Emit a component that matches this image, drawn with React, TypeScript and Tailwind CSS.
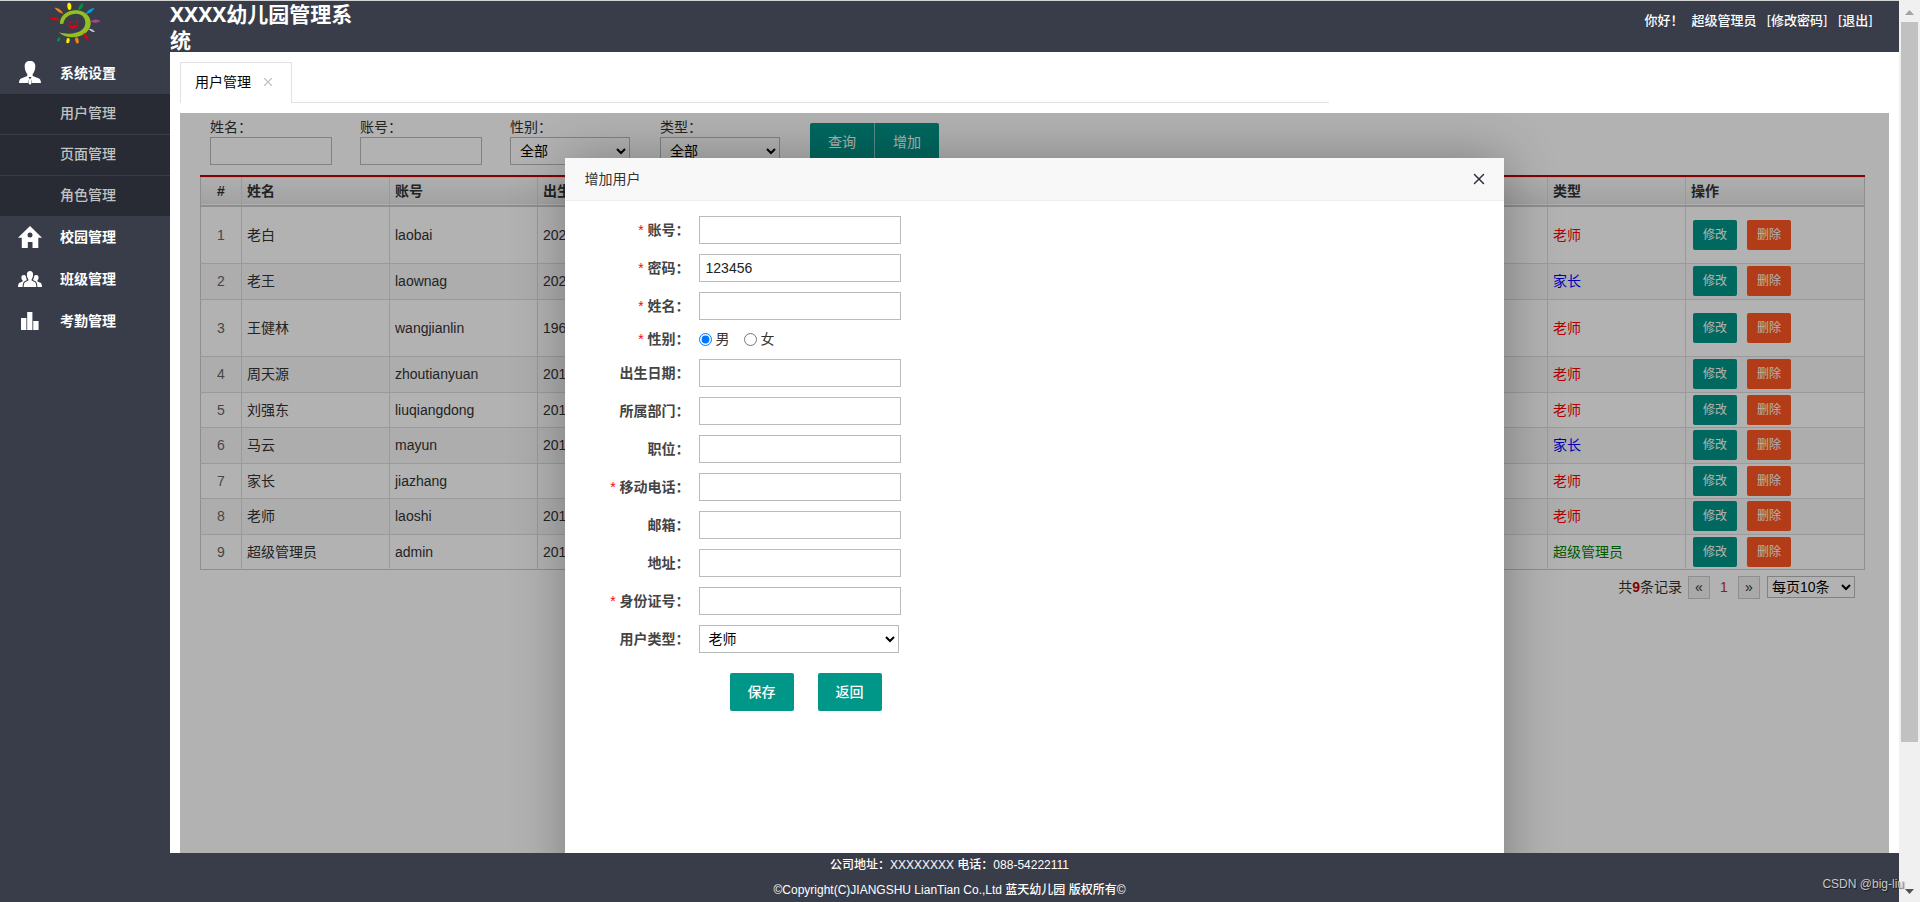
/**
 * User Management Page
 *
 * Kindergarten admin: sidebar, tab bar, user list and the "add user" dialog.
 */
import { useState } from "react";
import type { ReactNode } from "react";
import { X } from "lucide-react";

type UserType = "老师" | "家长" | "超级管理员";

interface User {
  name: string;
  account: string;
  birth: string;
  type: UserType;
  tall?: boolean;
}

const users: User[] = [
  { name: "老白", account: "laobai", birth: "2022", type: "老师", tall: true },
  { name: "老王", account: "laownag", birth: "2022", type: "家长" },
  { name: "王健林", account: "wangjianlin", birth: "1962", type: "老师", tall: true },
  { name: "周天源", account: "zhoutianyuan", birth: "2019", type: "老师" },
  { name: "刘强东", account: "liuqiangdong", birth: "2019", type: "老师" },
  { name: "马云", account: "mayun", birth: "2019", type: "家长" },
  { name: "家长", account: "jiazhang", birth: "", type: "老师" },
  { name: "老师", account: "laoshi", birth: "2019", type: "老师" },
  { name: "超级管理员", account: "admin", birth: "2019", type: "超级管理员" },
];

const typeColors: Record<UserType, string> = {
  老师: "text-[#ff0000]",
  家长: "text-[#0000ff]",
  超级管理员: "text-[#008000]",
};

const Logo = () => (
  <svg viewBox="150 5 150 126" className="h-[42px] w-[50px]" aria-hidden="true">
    <path
      d="M180 71C179 44 205 27 233 30C260 33 274 53 272 72C269 98 241 112 213 111C198 110 185 105 177 96C190 100 201 101 212 100C238 99 255 86 256 69C257 52 245 40 228 40C209 40 193 51 190 70Z"
      fill="#93c01f"
    />
    <path d="M150 55Q163 49 179 58Q165 62 150 55Z" fill="#e3000f" stroke="#e3000f" strokeWidth="2" />
    <path d="M165 23Q180 24 188 39Q174 36 165 23Z" fill="#f08519" stroke="#f08519" strokeWidth="2" />
    <ellipse cx="208" cy="18" rx="6" ry="11" transform="rotate(-6 208 18)" fill="#ffed00" />
    <path d="M248 9Q251 23 236 29Q234 17 248 9Z" fill="#009640" stroke="#009640" strokeWidth="2" />
    <path d="M282 24Q276 38 258 40Q266 26 282 24Z" fill="#009fe3" stroke="#009fe3" strokeWidth="2" />
    <path d="M273 63Q286 54 300 62Q287 71 273 63Z" fill="#a4478f" stroke="#a4478f" strokeWidth="2" />
    <path d="M266 85Q279 85 285 95Q272 95 266 85Z" fill="#d0bfe0" />
    <path d="M251 99Q264 106 266 119Q253 114 251 99Z" fill="#e3000f" stroke="#e3000f" strokeWidth="2" />
    <ellipse cx="231" cy="120" rx="5" ry="9.500" transform="rotate(-12 231 120)" fill="#f08519" />
    <ellipse cx="204" cy="121" rx="5" ry="8" transform="rotate(10 204 121)" fill="#ffed00" />
    <ellipse cx="176" cy="117" rx="4" ry="7" transform="rotate(28 176 117)" fill="#009640" />
    <circle cx="211" cy="65" r="3.500" fill="#e3000f" />
    <circle cx="231" cy="64" r="3.500" fill="#e3000f" />
    <path d="M202 71Q218 81 235 71Q232 84 219 85Q206 84 202 71Z" fill="#e3000f" />
  </svg>
);

const PersonIcon = () => (
  <svg viewBox="0 0 22 24" className="h-6 w-[22px]" fill="currentColor" aria-hidden="true">
    <path d="M11 0C14.500 0 16.500 2 16.300 5.500C16.200 9 15 11.500 13.700 13V15L20 17.500C21.500 18.300 21.800 19.800 22 22H13L11.800 17.500L12.500 16H9.500L10.200 17.500L9 22H0C.2 19.800.500 18.300 2 17.500L8.300 15V13C7 11.500 5.800 9 5.700 5.500C5.500 2 7.500 0 11 0Z" />
    <path d="M10.300 17.500H11.700L12.600 22L11 24L9.400 22Z" />
  </svg>
);

const HouseIcon = () => (
  <svg viewBox="0 0 24 24" className="h-6 w-6" aria-hidden="true">
    <path
      fill="currentColor"
      fillRule="evenodd"
      d="M12 1L24 12.800H20.300V23H14.500V17H9.800V23H3.800V12.800H0ZM12 7.500A2.500 2.500 0 1 0 12 12.500A2.500 2.500 0 1 0 12 7.500Z"
    />
  </svg>
);

const GroupIcon = () => (
  <svg viewBox="0 0 24 16" className="h-4 w-6" fill="currentColor" aria-hidden="true">
    <path d="M12 0C14 0 15.200 1.500 15.100 4C15 6 14.300 7.500 13.600 8.300V9.500L17 11.200C18 12 18.200 14 18.300 16H5.700C5.800 14 6 12 7 11.200L10.400 9.500V8.300C9.700 7.500 9 6 8.900 4C8.800 1.500 10 0 12 0Z" />
    <path d="M5.800 4C7 4 7.800 4.600 8 5.800C8.200 7.600 8.700 8.400 9 9L6.200 10.400C5 11.300 4.700 13.500 4.600 16H0C.2 13.600.500 12.300 1.500 11.800L4.600 10.400V9.500C3.900 8.800 3.300 7.800 3.400 6.300C3.500 4.800 4.300 4 5.800 4Z" />
    <path d="M18.200 4C17 4 16.200 4.600 16 5.800C15.800 7.600 15.300 8.400 15 9L17.800 10.400C19 11.300 19.300 13.500 19.400 16H24C23.800 13.600 23.500 12.300 22.500 11.800L19.400 10.400V9.500C20.100 8.800 20.700 7.800 20.600 6.300C20.500 4.800 19.700 4 18.200 4Z" />
  </svg>
);

const BarsIcon = () => (
  <svg viewBox="0 0 18 18" className="h-[18px] w-[18px]" fill="currentColor" aria-hidden="true">
    <path d="M0 6H5.400V18H0ZM6.200 0H11.400V18H6.200ZM12.200 9H17.600V18H12.200Z" />
  </svg>
);

function MenuHeader({ icon, children }: { icon: ReactNode; children: ReactNode }) {
  return (
    <a href="#" className="flex h-[42px] items-center font-bold text-white">
      <span className="flex w-[60px] justify-center">{icon}</span>
      {children}
    </a>
  );
}

function Sidebar() {
  return (
    <nav className="flex w-[170px] shrink-0 flex-col bg-[#393d49] text-sm">
      <div className="flex h-[51px] items-start pt-px pl-[50px]">
        <Logo />
      </div>
      <MenuHeader icon={<PersonIcon />}>系统设置</MenuHeader>
      <ul className="divide-y divide-[#393d49] bg-[#282b33]">
        {["用户管理", "页面管理", "角色管理"].map((item) => (
          <li key={item}>
            <a href="#" className="flex h-10 items-center pb-0.5 pl-[60px] font-medium text-[#c2c2c2]">
              {item}
            </a>
          </li>
        ))}
      </ul>
      <MenuHeader icon={<HouseIcon />}>校园管理</MenuHeader>
      <MenuHeader icon={<GroupIcon />}>班级管理</MenuHeader>
      <MenuHeader icon={<BarsIcon />}>考勤管理</MenuHeader>
    </nav>
  );
}

function Header() {
  return (
    <header className="flex h-[51px] shrink-0 items-start justify-between bg-[#393d49] text-white">
      <h1 className="w-[200px] font-['Noto_Sans','Noto_Sans_CJK_SC',sans-serif] text-[21px] leading-[26px] font-bold">
        XXXX幼儿园管理系统
      </h1>
      <div className="flex pt-[9px] pr-[26px] font-['Noto_Sans_CJK_SC',sans-serif] text-[13px] leading-5 font-medium">
        <span className="mr-2">你好！</span>
        <span className="mr-2.5">超级管理员</span>
        <a href="#" className="mr-2.5">[修改密码]</a>
        <a href="#">[退出]</a>
      </div>
    </header>
  );
}

function FilterBar() {
  return (
    <div className="flex items-start pl-2.5 text-[#333]">
      {["姓名", "账号"].map((label) => (
        <label key={label} className="w-[150px] pt-1">
          <span className="block leading-5">{label}：</span>
          <input type="text" className="block h-7 w-[122px] border border-[#bbb] bg-white px-1.5" />
        </label>
      ))}
      {["性别", "类型"].map((label) => (
        <label key={label} className="w-[150px] pt-1">
          <span className="block leading-5">{label}：</span>
          <select className="block h-7 w-[120px] border border-[#bbb] bg-white pl-[5px] text-black">
            <option>全部</option>
          </select>
        </label>
      ))}
      <div className="mt-2.5 flex overflow-hidden rounded-xs">
        <button type="button" className="h-[38px] w-16 bg-[#009688] text-white">查询</button>
        <button type="button" className="h-[38px] w-[65px] border-l border-white/50 bg-[#009688] text-white">增加</button>
      </div>
    </div>
  );
}

function UserTable() {
  return (
    <table className="mt-2.5 w-full table-fixed border-collapse border border-[#ccc] text-left text-[#333]">
      <thead>
        <tr className="h-[30px] border-t-2 border-b-2 border-t-[#c00000] border-b-[#ccc] bg-linear-to-b from-[#fafafa] to-[#e8e8e8]">
          <th className="w-[41px] border-r border-[#ddd] text-center">#</th>
          <th className="w-[148px] border-r border-[#ddd] px-[5px]">姓名</th>
          <th className="w-[148px] border-r border-[#ddd] px-[5px]">账号</th>
          <th className="border-r border-[#ddd] px-[5px]">出生日期</th>
          <th className="w-[138px] border-r border-[#ddd] px-[5px]">类型</th>
          <th className="w-[179px] px-[5px]">操作</th>
        </tr>
      </thead>
      <tbody>
        {users.map((user, index) => (
          <tr
            key={user.account}
            className={`border-b border-[#ddd] last:border-[#ccc] even:bg-[#f8f8f8] ${
              user.tall ? "h-[57px]" : "h-[35px] even:h-9"
            }`}
          >
            <td className="border-r border-[#ddd] text-center text-[#666]">{index + 1}</td>
            <td className="border-r border-[#ddd] px-[5px]">{user.name}</td>
            <td className="border-r border-[#ddd] px-[5px]">{user.account}</td>
            <td className="border-r border-[#ddd] px-[5px]">{user.birth}</td>
            <td className={`border-r border-[#ddd] px-[5px] ${typeColors[user.type]}`}>{user.type}</td>
            <td className="px-[7px]">
              <div className="flex gap-2.5 text-xs text-white">
                <button type="button" className="h-[30px] w-11 rounded-xs bg-[#009688]">修改</button>
                <button type="button" className="h-[30px] w-11 rounded-xs bg-[#ff5722]">删除</button>
              </div>
            </td>
          </tr>
        ))}
      </tbody>
    </table>
  );
}

function Pager() {
  return (
    <div className="mt-1.5 flex items-center justify-end pr-2.5 text-[#333]">
      <span>
        共<b className="text-[#c00000]">9</b>条记录
      </span>
      <button type="button" className="ml-1.5 h-[23px] w-[22px] border border-[#ccc] bg-[#f2f2f2]">«</button>
      <span className="w-7 text-center text-[#c30]">1</span>
      <button type="button" className="h-[23px] w-[22px] border border-[#ccc] bg-[#f2f2f2]">»</button>
      <select aria-label="每页条数" className="ml-[7px] h-[22px] w-[88px] border border-[#bbb] bg-white text-black">
        <option>每页10条</option>
      </select>
    </div>
  );
}

interface FormRowProps {
  label: string;
  id: string;
  required?: boolean;
  children: ReactNode;
}

function FormRow({ label, id, required, children }: FormRowProps) {
  return (
    <div className="flex items-center">
      <label htmlFor={id} className="mr-[9px] w-[125px] text-right leading-[19px] font-bold text-[#444]">
        {required && <span className="font-normal text-[#ff0000]">* </span>}
        {label}：
      </label>
      {children}
    </div>
  );
}

const inputClass = "h-7 w-[202px] border border-[#bbb] bg-white px-1.5 text-[#222]";

function AddUserDialog() {
  const [gender, setGender] = useState("男");

  return (
    <div
      role="dialog"
      aria-label="增加用户"
      className="absolute inset-x-0 top-[45px] -bottom-10 mx-auto w-[55%] bg-white shadow-[1px_1px_50px_rgba(0,0,0,0.3)]"
    >
      <div className="flex h-[43px] items-center justify-between border-b border-[#eee] bg-[#f8f8f8] pr-4 pl-5 text-[#333]">
        <span>增加用户</span>
        <button type="button" aria-label="关闭">
          <X className="h-[18px] w-[18px] text-[#2e2d3c]" strokeWidth={2} />
        </button>
      </div>

      <form className="flex flex-col gap-2.5 pt-[15px]">
        <FormRow label="账号" id="account" required>
          <input id="account" type="text" className={inputClass} />
        </FormRow>
        <FormRow label="密码" id="password" required>
          <input id="password" type="text" defaultValue="123456" className={inputClass} />
        </FormRow>
        <FormRow label="姓名" id="name" required>
          <input id="name" type="text" className={inputClass} />
        </FormRow>
        <FormRow label="性别" id="gender-男" required>
          <div className="flex gap-3.5 leading-[19px] text-[#333]">
            {["男", "女"].map((g) => (
              <label key={g} className="flex items-center gap-1">
                <input
                  id={`gender-${g}`}
                  type="radio"
                  name="gender"
                  checked={gender === g}
                  onChange={() => setGender(g)}
                  className="h-[13px] w-[13px]"
                />
                {g}
              </label>
            ))}
          </div>
        </FormRow>
        <FormRow label="出生日期" id="birth">
          <input id="birth" type="text" className={inputClass} />
        </FormRow>
        <FormRow label="所属部门" id="department">
          <input id="department" type="text" className={inputClass} />
        </FormRow>
        <FormRow label="职位" id="position">
          <input id="position" type="text" className={inputClass} />
        </FormRow>
        <FormRow label="移动电话" id="phone" required>
          <input id="phone" type="text" className={inputClass} />
        </FormRow>
        <FormRow label="邮箱" id="email">
          <input id="email" type="text" className={inputClass} />
        </FormRow>
        <FormRow label="地址" id="address">
          <input id="address" type="text" className={inputClass} />
        </FormRow>
        <FormRow label="身份证号" id="idcard" required>
          <input id="idcard" type="text" className={inputClass} />
        </FormRow>
        <FormRow label="用户类型" id="usertype">
          <select id="usertype" className="h-7 w-[200px] border border-[#bbb] bg-white pl-[5px] text-black">
            <option>老师</option>
            <option>家长</option>
          </select>
        </FormRow>
        <div className="mt-2.5 flex gap-6 pl-[165px] font-medium text-white">
          <button type="button" className="h-[38px] w-16 rounded-xs bg-[#009688]">保存</button>
          <button type="button" className="h-[38px] w-16 rounded-xs bg-[#009688]">返回</button>
        </div>
      </form>
    </div>
  );
}

export default function App() {
  return (
    <div className="relative flex h-screen overflow-hidden bg-white font-['Liberation_Sans','Noto_Sans_CJK_SC',sans-serif] text-sm">
      <div className="flex min-w-0 flex-1 flex-col border-t border-[#d4d4d4]">
        <div className="flex min-h-0 flex-1">
          <Sidebar />
          <div className="flex min-w-0 flex-1 flex-col">
            <Header />

            <main className="flex min-h-0 flex-1 flex-col px-2.5 pt-2.5">
              {/* Tabs */}
              <div className="flex w-full max-w-[1149px]">
                <div className="flex h-[41px] w-28 items-center justify-between border border-b-0 border-[#e2e2e2] pr-4 pb-0.5 pl-3.5 text-black">
                  用户管理
                  <button type="button" aria-label="关闭标签">
                    <X className="h-3.5 w-3.5 text-[#c2c2c2]" strokeWidth={2} />
                  </button>
                </div>
                <div className="flex-1 border-b border-[#e2e2e2]" />
              </div>

              {/* Page content with the dialog on top */}
              <div className="relative mt-2.5 min-h-0 flex-1 overflow-hidden">
                <div className="pr-6 pl-5">
                  <FilterBar />
                  <UserTable />
                  <Pager />
                </div>
                <div className="absolute inset-0 bg-black/30" />
                <AddUserDialog />
              </div>
            </main>
          </div>
        </div>

        <footer className="h-[49px] shrink-0 bg-[#393d49] text-center text-xs leading-[25px] font-medium text-white">
          <p>公司地址：XXXXXXXX 电话：088-54222111</p>
          <p>©Copyright(C)JIANGSHU LianTian Co.,Ltd 蓝天幼儿园 版权所有©</p>
        </footer>
      </div>

      {/* Scroll rail */}
      <div className="flex w-[21px] shrink-0 flex-col items-center bg-[#f0f0f0] pt-2.5 pb-2" aria-hidden="true">
        <svg viewBox="0 0 9 5" className="h-[5px] w-[9px] fill-[#a3a3a3]">
          <path d="M4.500 0L9 5H0Z" />
        </svg>
        <div className="mt-[7px] h-[720px] max-h-[82%] w-[17px] bg-[#c1c1c1]" />
        <svg viewBox="0 0 9 5" className="mt-auto h-[5px] w-[9px] fill-[#505050]">
          <path d="M0 0H9L4.500 5Z" />
        </svg>
      </div>

      <span className="absolute right-4 bottom-2.5 text-xs leading-4 text-[#c8c8c8] [text-shadow:1px_1px_1px_rgba(0,0,0,0.6)]">
        CSDN @big-liu
      </span>
    </div>
  );
}
